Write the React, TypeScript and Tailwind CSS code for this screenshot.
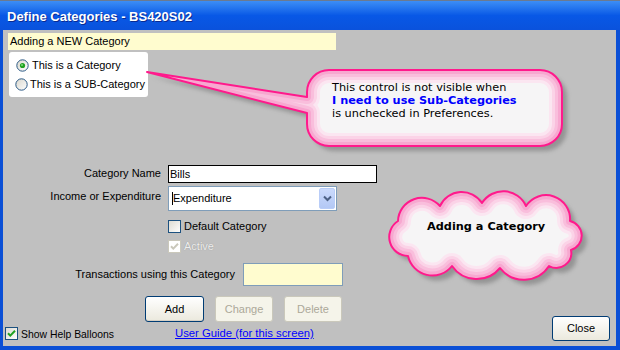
import React from "react";

const Radio = ({ checked }: { checked?: boolean }) => (
  <svg width="13" height="13" viewBox="0 0 13 13" className="shrink-0">
    <defs>
      <linearGradient id={checked ? "rg1" : "rg2"} x1="0" y1="0" x2="1" y2="1">
        <stop offset="0" stopColor="#d8d6cc" />
        <stop offset="1" stopColor="#ffffff" />
      </linearGradient>
    </defs>
    <circle cx="6.5" cy="6.5" r="5.7" fill={`url(#${checked ? "rg1" : "rg2"})`} stroke="#2c5a86" strokeWidth="1" />
    {checked && (
      <>
        <circle cx="6.5" cy="6.5" r="2.6" fill="#21a121" />
        <circle cx="6" cy="6" r="1" fill="#7fdc7f" />
      </>
    )}
  </svg>
);

const Check = ({ checked, disabled }: { checked?: boolean; disabled?: boolean }) => (
  <svg width="13" height="13" viewBox="0 0 13 13" className="shrink-0">
    <defs>
      <linearGradient id="cbg" x1="0" y1="0" x2="1" y2="1">
        <stop offset="0" stopColor="#dcdad0" />
        <stop offset="1" stopColor="#ffffff" />
      </linearGradient>
    </defs>
    <rect
      x="0.5"
      y="0.5"
      width="12"
      height="12"
      fill={disabled ? "#ffffff" : "url(#cbg)"}
      stroke={disabled ? "#cac8bb" : "#1c5180"}
    />
    {checked && (
      <path
        d="M3 6.2 L5.3 8.6 L10 3.8"
        fill="none"
        stroke={disabled ? "#cac8bb" : "#21a121"}
        strokeWidth="2"
      />
    )}
  </svg>
);

const XpButton = ({ label, disabled }: { label: string; disabled?: boolean }) => (
  <div
    className={
      disabled
        ? "w-[58px] h-[26px] rounded-[3px] border border-[#cac8bb] bg-[#f5f4ea] text-[#aca899] flex items-center justify-center"
        : "w-[59px] h-[26px] rounded-[3px] border border-[#003c74] bg-gradient-to-b from-[#ffffff] to-[#ebe9dd] text-black flex items-center justify-center shadow-[inset_0_-1px_0_#d6d0c5]"
    }
  >
    {label}
  </div>
);

const calloutPath =
  "M147,72 L307,97 L307,92 A22,22 0 0 1 329,70 L540,70 A22,22 0 0 1 562,92 L562,124 A22,22 0 0 1 540,146 L329,146 A22,22 0 0 1 307,124 L307,113 Z";

const cloudPath =
  "M398,221 A24,24 0 0 1 440,206 A24,24 0 0 1 482,203 A25,25 0 0 1 526,206 A24,24 0 0 1 570,221 A15,15 0 0 1 571,250 A15,15 0 0 1 549,266 A30,30 0 0 1 500,268 A30,30 0 0 1 452,266 A25,25 0 0 1 408,256 A19,19 0 0 1 398,221 Z";

const Balloon = ({ d, id }: { d: string; id: string }) => (
  <g>
    <clipPath id={id}>
      <path d={d} />
    </clipPath>
    <path d={d} fill="#707070" opacity="0.55" transform="translate(5,5)" filter="url(#blur)" />
    <path d={d} fill="#f6f5f6" />
    <g clipPath={`url(#${id})`} fill="none" strokeLinejoin="round">
      <path d={d} stroke="#fbe6f1" strokeWidth="26" />
      <path d={d} stroke="#fbd3e7" strokeWidth="20" />
      <path d={d} stroke="#f9bedc" strokeWidth="14" />
      <path d={d} stroke="#f7a8d0" strokeWidth="8" />
    </g>
    <path d={d} fill="none" stroke="#ff1a8c" strokeWidth="2" strokeLinejoin="round" />
  </g>
);

const App = () => {
  return (
    <div className="relative w-[620px] h-[350px] overflow-hidden bg-[#0a4fd6] flex flex-col font-['Liberation_Sans',Arial,sans-serif] text-[11px] leading-[13px] text-black">
      {/* title bar */}
      <div className="h-[30px] shrink-0 flex items-center pl-[7px] pt-[2px] border-t border-[#6b7a90] bg-gradient-to-b from-[#3d8ef5] via-[#0858e6] to-[#0a52dc]">
        <span className="text-white font-bold text-[13px] [text-shadow:1px_1px_0_#0a2a90]">
          Define Categories - BS420S02
        </span>
      </div>

      {/* dialog body */}
      <div className="flex-1 ml-[3px] mr-[4px] mb-[4px] bg-[#c0c0c0] flex flex-col">
        <div className="mt-[3px] ml-[5px] w-[328px] h-[17px] bg-[#fffccf] flex items-center pl-[2px]">
          Adding a NEW Category
        </div>

        <div className="mt-[2px] ml-[6px] w-[139px] h-[45px] bg-white rounded-[3px] flex flex-col justify-center gap-[6px] pl-[7px]">
          <div className="flex items-center gap-[3px]">
            <Radio checked />
            <span>This is a Category</span>
          </div>
          <div className="flex items-center gap-[2px] -ml-[1px]">
            <Radio />
            <span>This is a SUB-Category</span>
          </div>
        </div>

        <div className="mt-[68px] h-[18px] flex items-center">
          <div className="w-[158px] text-right -mt-[2px]">Category Name</div>
          <div className="ml-[7px] w-[209px] h-[18px] border border-black bg-white flex items-center pl-[1px]">
            Bills
          </div>
        </div>

        <div className="mt-[3px] h-[25px] flex items-center">
          <div className="w-[158px] text-right -mt-[4px]">Income or Expenditure</div>
          <div className="ml-[7px] w-[169px] h-[25px] border border-[#7f9db9] bg-white flex items-center pl-[3px] pr-[1px]">
            <div className="w-[1px] h-[13px] bg-black" />
            <span className="flex-1">Expenditure</span>
            <div className="w-[16px] h-[21px] rounded-[2px] bg-gradient-to-b from-[#cbdafc] to-[#b3c8f5] border border-[#b9cdf8] flex items-center justify-center">
              <svg width="9" height="7" viewBox="0 0 9 7">
                <path d="M1 1.5 L4.5 5 L8 1.5" fill="none" stroke="#4d6185" strokeWidth="2" />
              </svg>
            </div>
          </div>
        </div>

        <div className="mt-[9px] ml-[165px] h-[13px] flex items-center gap-[3px]">
          <Check />
          <span>Default Category</span>
        </div>

        <div className="mt-[7px] ml-[165px] h-[13px] flex items-center gap-[3px]">
          <Check checked disabled />
          <span className="text-[#eeeeee] [text-shadow:0_0_1px_#8a8a8a]">Active</span>
        </div>

        <div className="mt-[10px] h-[23px] flex items-center">
          <div className="w-[232px] text-right">Transactions using this Category</div>
          <div className="ml-[8px] w-[100px] h-[23px] border border-[#7f9db9] bg-[#fffccf]" />
        </div>

        <div className="mt-[10px] h-[26px] flex items-center pl-[142px] gap-[11px]">
          <XpButton label="Add" />
          <XpButton label="Change" disabled />
          <XpButton label="Delete" disabled />
        </div>

        <div className="-mt-[6px] h-[25px] flex items-end">
          <div className="ml-[2px] w-[170px] flex items-center gap-[3px]">
            <Check checked />
            <span className="text-[10.4px] mt-[2px]">Show Help Balloons</span>
          </div>
          <span className="mb-[1px] text-[#0000ff] underline text-[11.3px]">
            User Guide (for this screen)
          </span>
          <div className="ml-auto mr-[6px] w-[58px] h-[25px] rounded-[3px] border border-[#003c74] bg-gradient-to-b from-[#ffffff] to-[#ebe9dd] flex items-center justify-center">
            Close
          </div>
        </div>
      </div>

      {/* help balloons */}
      <svg className="absolute inset-0 pointer-events-none" width="620" height="350" viewBox="0 0 620 350">
        <defs>
          <filter id="blur" x="-10%" y="-10%" width="120%" height="130%">
            <feGaussianBlur stdDeviation="2" />
          </filter>
        </defs>
        <Balloon d={calloutPath} id="callclip" />
        <Balloon d={cloudPath} id="cloudclip" />
      </svg>

      <div className="absolute left-[332px] top-[81px] font-['DejaVu_Sans',Verdana,sans-serif] text-[11.3px] leading-[13px] text-black">
        <div>This control is not visible when</div>
        <div className="font-bold text-[#0000ff]">I need to use Sub-Categories</div>
        <div>is unchecked in Preferences.</div>
      </div>

      <div className="absolute left-[427px] top-[220px] font-['DejaVu_Sans',Verdana,sans-serif] font-bold text-[11.3px] leading-[14px] text-black">
        Adding a Category
      </div>
    </div>
  );
};

export default App;
